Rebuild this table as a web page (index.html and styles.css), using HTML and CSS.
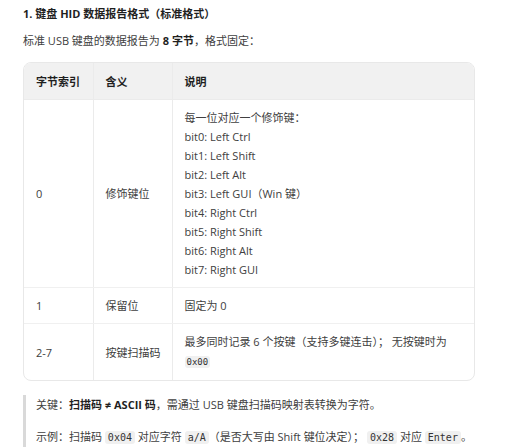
FILE: index.html
```html
<!DOCTYPE html>
<html lang="zh-CN">
<head>
<meta charset="utf-8">
<link rel="stylesheet" href="styles.css">
</head>
<body>
<div class="doc">
  <h3 class="title">1. 键盘 HID 数据报告格式（标准格式）</h3>
  <p class="lead">标准 USB 键盘的数据报告为 <strong>8 字节</strong>，格式固定：</p>
  <div class="table-wrap">
    <table class="grid">
      <colgroup>
        <col class="c1"><col class="c2"><col class="c3">
      </colgroup>
      <thead>
        <tr><th>字节索引</th><th>含义</th><th>说明</th></tr>
      </thead>
      <tbody>
        <tr>
          <td>0</td>
          <td>修饰键位</td>
          <td>每一位对应一个修饰键：<br>bit0: Left Ctrl<br>bit1: Left Shift<br>bit2: Left Alt<br>bit3: Left GUI（Win 键）<br>bit4: Right Ctrl<br>bit5: Right Shift<br>bit6: Right Alt<br>bit7: Right GUI</td>
        </tr>
        <tr>
          <td>1</td>
          <td>保留位</td>
          <td>固定为 0</td>
        </tr>
        <tr>
          <td>2-7</td>
          <td>按键扫描码</td>
          <td>最多同时记录 6 个按键（支持多键连击）；&nbsp;无按键时为 <code class="code small">0x00</code></td>
        </tr>
      </tbody>
    </table>
  </div>
  <blockquote class="note">
    <p>关键：<strong>扫描码 ≠ ASCII 码</strong>，需通过 USB 键盘扫描码映射表转换为字符。</p>
    <p>示例：扫描码 <code class="code">0x04</code> 对应字符 <code class="code">a/A</code>（是否大写由 Shift 键位决定）；&nbsp;<code class="code">0x28</code> 对应 <code class="code">Enter</code>。</p>
  </blockquote>
</div>
</body>
</html>
```

FILE: styles.css
```css
html, body {
  margin: 0;
  padding: 0;
  background: #ffffff;
}
body {
  font-family: "Open Sans", "Noto Sans CJK SC", sans-serif;
  font-size: 11px;
  line-height: 19px;
  color: #404040;
}
.doc {
  width: 452px;
  margin-left: 23px;
  padding-top: 4px;
}
.title {
  margin: 0 0 7px 0;
  font-size: 11px;
  font-weight: 700;
  line-height: 20px;
  color: #1f1f1f;
}
.lead {
  margin: 0 0 12px 0;
}
.lead strong, .note strong {
  color: #1f1f1f;
  font-weight: 700;
}
.table-wrap {
  border: 1px solid #e8e8e8;
  border-radius: 8px;
  overflow: hidden;
}
.grid {
  width: 100%;
  border-collapse: collapse;
  table-layout: fixed;
}
.c1 { width: 69px; }
.c2 { width: 79px; }
.grid th {
  background: #f1f1f1;
  text-align: left;
  font-weight: 700;
  color: #1f1f1f;
  padding: 9px 8px 8px 12px;
  border-bottom: 1px solid #ebebeb;
  border-right: 1px solid #ebebeb;
}
.grid td {
  padding: 8px 8px 8px 12px;
  vertical-align: middle;
  border-bottom: 1px solid #f0f0f0;
  border-right: 1px solid #ebebeb;
}
.grid th:last-child, .grid td:last-child {
  border-right: none;
  padding-right: 12px;
}
.grid tr:last-child td {
  border-bottom: none;
}
.code {
  font-family: "DejaVu Sans Mono", monospace;
  font-size: 10px;
  background: #f0f0f0;
  border-radius: 3px;
  padding: 1px 3px;
  color: #333333;
}
.code.small {
  font-size: 9px;
  padding: 1px 2px;
}
.note {
  margin: 14px 0 0 0;
  padding: 0 0 0 10px;
  border-left: 3px solid #d9d9d9;
}
.note p {
  margin: 0 0 13px 0;
}
```
